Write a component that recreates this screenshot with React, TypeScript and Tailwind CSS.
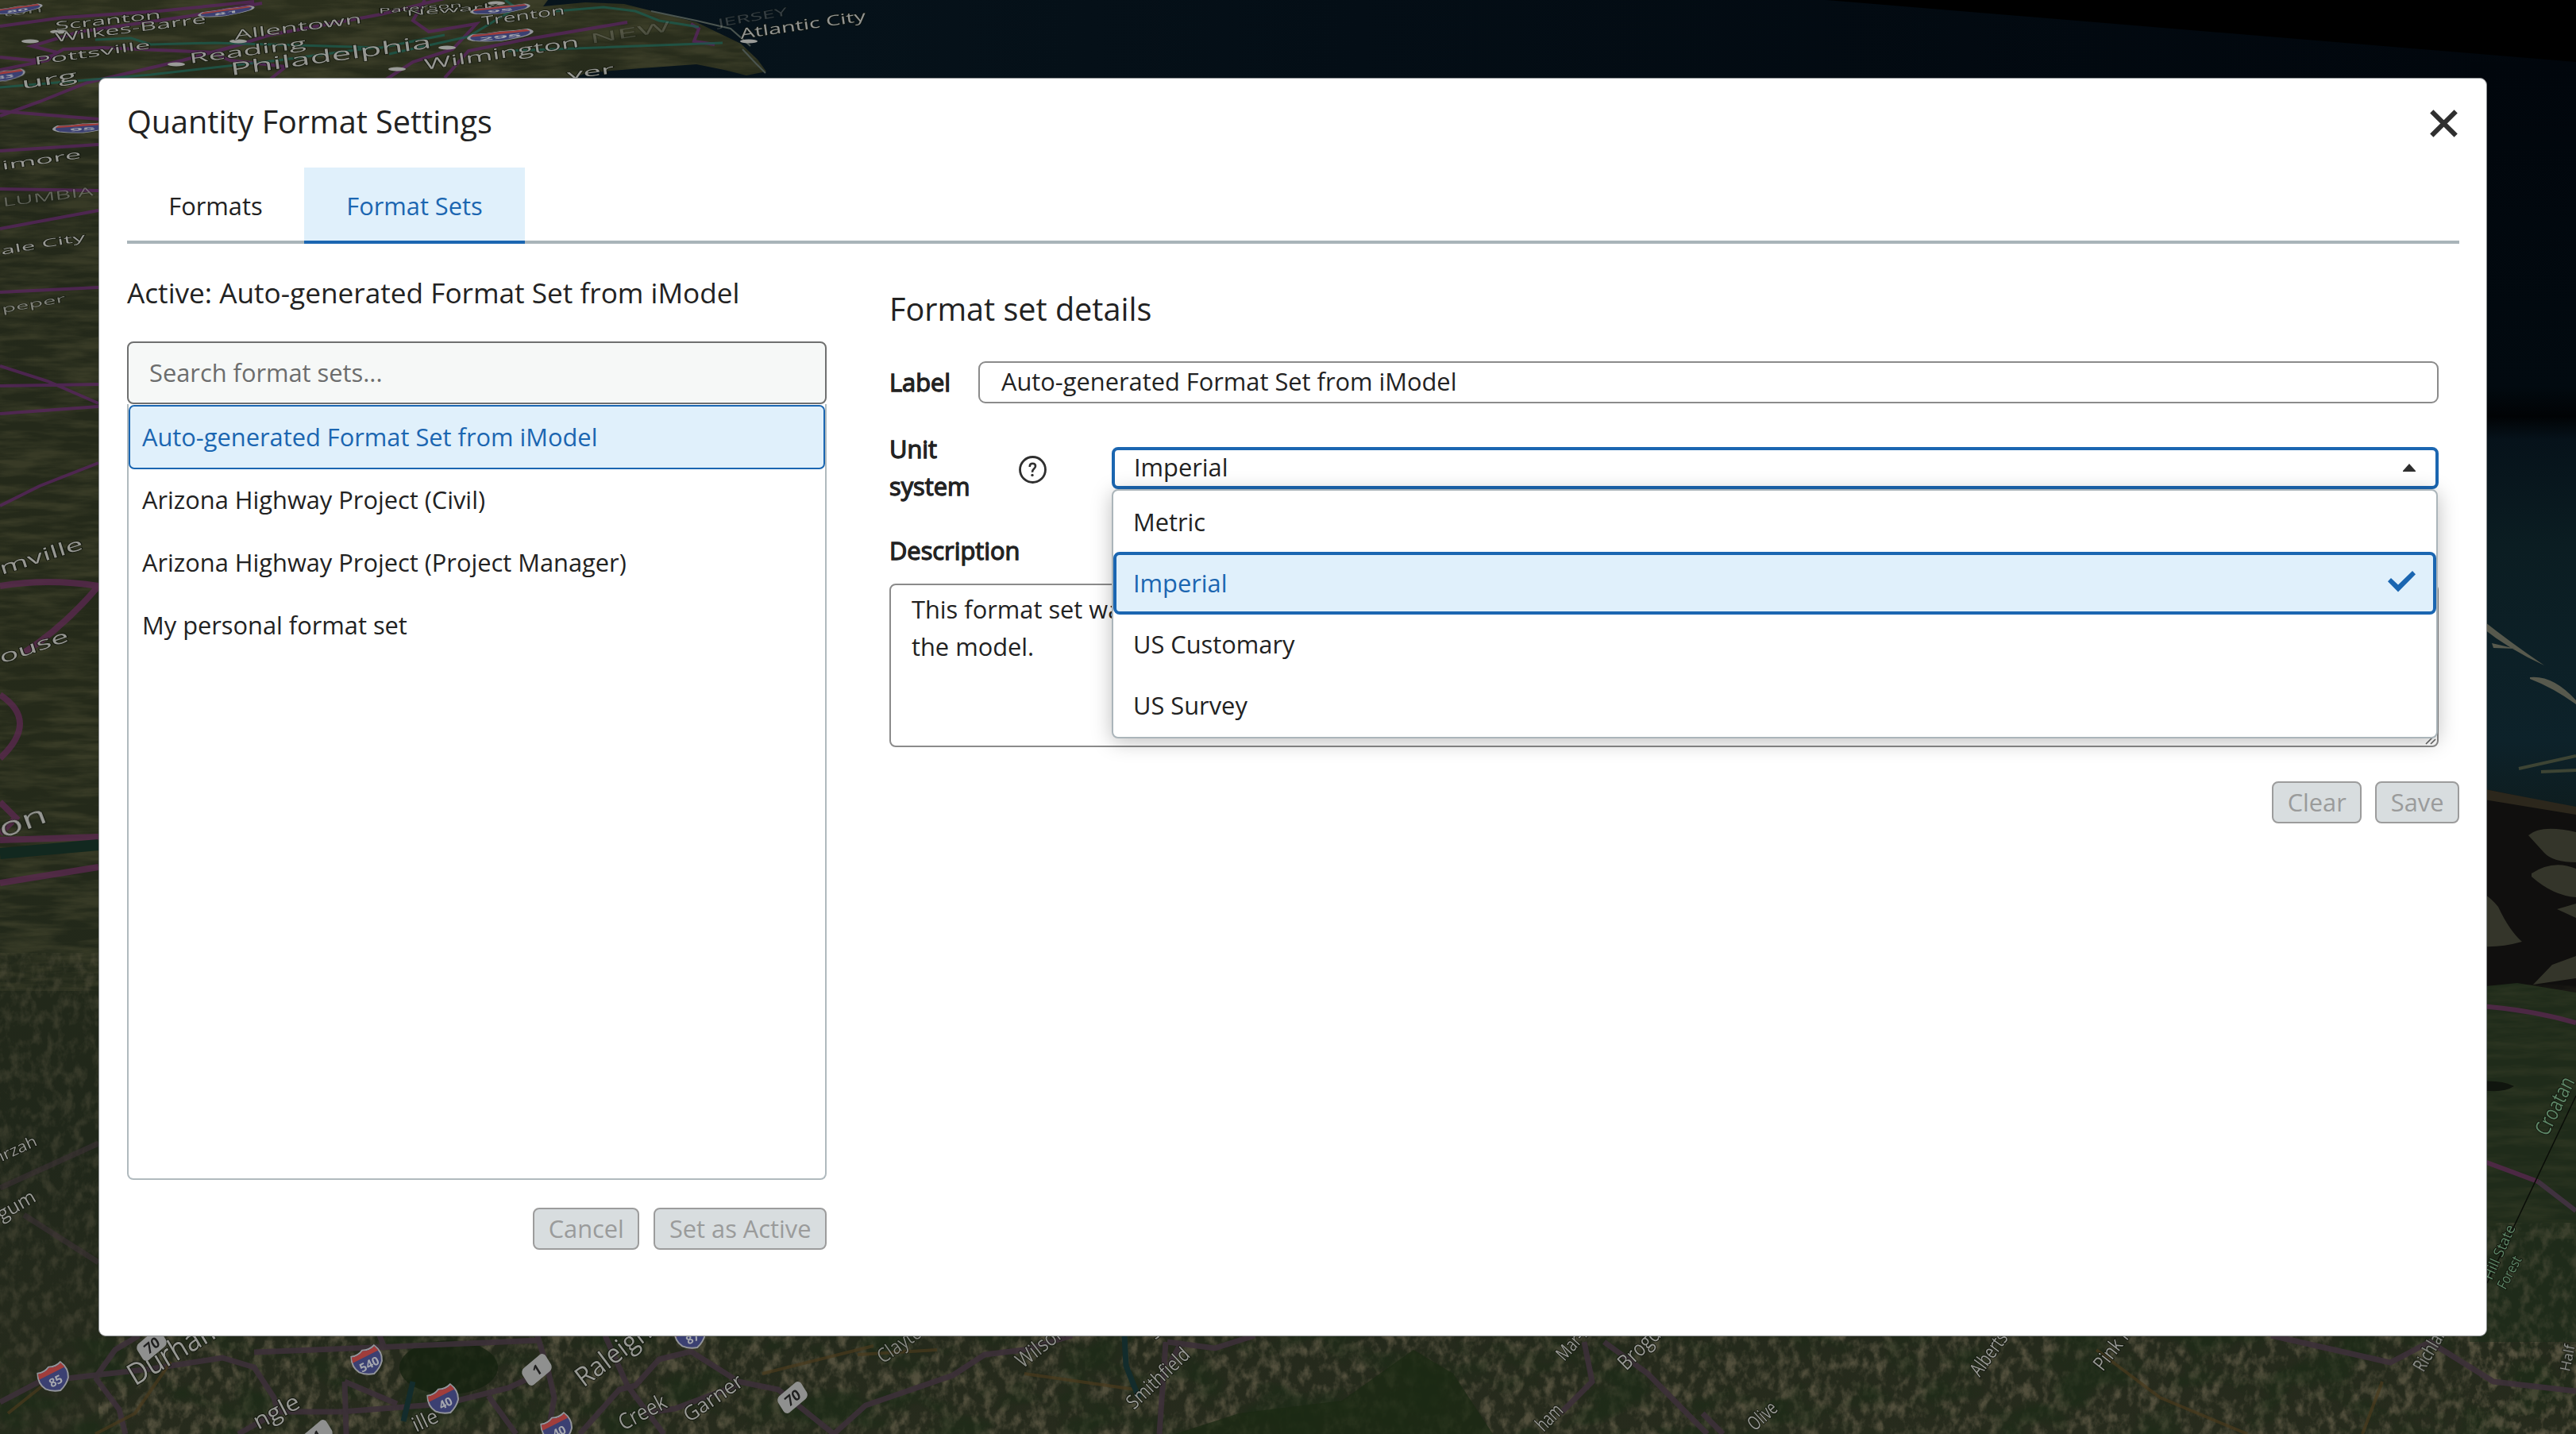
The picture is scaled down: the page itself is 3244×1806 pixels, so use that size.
import type { ReactNode } from "react";

type Label = { t: string; x1: number; y1: number; x2: number; y2: number; s: number; sy?: number; c?: string; o?: number };

const labels: Label[] = [
  { t: "Scranton", x1: 70, y1: 38, x2: 203, y2: 23, s: 24, sy: 0.6 },
  { t: "Wilkes-Barre", x1: 70, y1: 53, x2: 260, y2: 29, s: 28, sy: 0.55 },
  { t: "Allentown", x1: 296, y1: 50, x2: 456, y2: 29, s: 30, sy: 0.55 },
  { t: "Pottsville", x1: 44, y1: 82, x2: 190, y2: 61, s: 26, sy: 0.55 },
  { t: "Reading", x1: 239, y1: 80, x2: 386, y2: 60, s: 32, sy: 0.55 },
  { t: "Philadelphia", x1: 291, y1: 95, x2: 544, y2: 60, s: 40, sy: 0.55 },
  { t: "Wilmington", x1: 535, y1: 88, x2: 730, y2: 59, s: 34, sy: 0.55 },
  { t: "Trenton", x1: 607, y1: 32, x2: 712, y2: 18, s: 28, sy: 0.55 },
  { t: "Paterson", x1: 477, y1: 17, x2: 582, y2: 9, s: 18, sy: 0.5 },
  { t: "Newark", x1: 512, y1: 20, x2: 625, y2: 11, s: 20, sy: 0.5 },
  { t: "Atlantic City", x1: 933, y1: 49, x2: 1091, y2: 26, s: 30, sy: 0.6 },
  { t: "JERSEY", x1: 905, y1: 34, x2: 992, y2: 19, s: 28, sy: 0.5, o: 0.3 },
  { t: "NEW", x1: 744, y1: 55, x2: 845, y2: 39, s: 34, sy: 0.5, o: 0.25 },
  { t: "ver", x1: 715, y1: 100, x2: 774, y2: 92, s: 32, sy: 0.5 },
  { t: "urg", x1: 28, y1: 112, x2: 98, y2: 101, s: 34, sy: 0.55 },
  { t: "ton", x1: 4, y1: 21, x2: 54, y2: 15, s: 22, sy: 0.5, o: 0.6 },
  { t: "imore", x1: 3, y1: 214, x2: 103, y2: 199, s: 30, sy: 0.5 },
  { t: "LUMBIA", x1: 4, y1: 260, x2: 118, y2: 246, s: 34, sy: 0.45, o: 0.45 },
  { t: "ale City", x1: 2, y1: 321, x2: 108, y2: 303, s: 28, sy: 0.5 },
  { t: "peper", x1: 3, y1: 394, x2: 83, y2: 380, s: 26, sy: 0.5, o: 0.7 },
  { t: "mville", x1: 2, y1: 724, x2: 106, y2: 691, s: 34, sy: 0.65 },
  { t: "ouse", x1: 2, y1: 836, x2: 88, y2: 807, s: 34, sy: 0.65 },
  { t: "on", x1: 3, y1: 1056, x2: 61, y2: 1034, s: 44, sy: 0.75 },
  { t: "irzah", x1: 2, y1: 1463, x2: 48, y2: 1442, s: 24, sy: 0.8 },
  { t: "gum", x1: 2, y1: 1538, x2: 47, y2: 1512, s: 30, sy: 0.8 },
  { t: "Durham", x1: 170, y1: 1746, x2: 284, y2: 1678, s: 38 },
  { t: "Raleigh", x1: 735, y1: 1748, x2: 823, y2: 1682, s: 34 },
  { t: "Garner", x1: 868, y1: 1792, x2: 938, y2: 1744, s: 26 },
  { t: "Creek", x1: 785, y1: 1802, x2: 842, y2: 1772, s: 28 },
  { t: "ngle", x1: 325, y1: 1801, x2: 380, y2: 1772, s: 29 },
  { t: "ille", x1: 524, y1: 1804, x2: 554, y2: 1790, s: 26 },
  { t: "Clayton", x1: 1112, y1: 1718, x2: 1174, y2: 1674, s: 25, o: 0.75 },
  { t: "Wilson", x1: 1288, y1: 1724, x2: 1344, y2: 1680, s: 27, o: 0.8 },
  { t: "Smithfield", x1: 1428, y1: 1776, x2: 1500, y2: 1708, s: 25 },
  { t: "Se", x1: 1455, y1: 1688, x2: 1474, y2: 1670, s: 24 },
  { t: "Mar-Mac", x1: 1970, y1: 1715, x2: 2020, y2: 1660, s: 24 },
  { t: "Brogden", x1: 2048, y1: 1727, x2: 2112, y2: 1664, s: 27 },
  { t: "ham", x1: 1944, y1: 1804, x2: 1970, y2: 1778, s: 25 },
  { t: "Olive", x1: 2210, y1: 1803, x2: 2240, y2: 1776, s: 25 },
  { t: "Albertson", x1: 2493, y1: 1735, x2: 2543, y2: 1667, s: 25 },
  { t: "Pink Hill", x1: 2648, y1: 1728, x2: 2698, y2: 1664, s: 25 },
  { t: "Richlands", x1: 3052, y1: 1729, x2: 3092, y2: 1660, s: 24 },
  { t: "Half", x1: 3236, y1: 1728, x2: 3243, y2: 1695, s: 18 },
  { t: "Croatan", x1: 3208, y1: 1432, x2: 3243, y2: 1362, s: 27, c: "#64906f" },
  { t: "Hill State", x1: 3138, y1: 1613, x2: 3168, y2: 1546, s: 18, c: "#64906f" },
  { t: "Forest", x1: 3155, y1: 1625, x2: 3176, y2: 1586, s: 18, c: "#64906f" },
];

function MapLabel({ t, x1, y1, x2, y2, s, sy = 1, c = "#a3a4a0", o = 0.9 }: Label) {
  const len = Math.hypot(x2 - x1, y2 - y1);
  const angle = (Math.atan2(y2 - y1, x2 - x1) * 180) / Math.PI;
  return (
    <text
      transform={`translate(${x1} ${y1}) rotate(${angle}) scale(1 ${sy})`}
      fontSize={s}
      fontWeight={500}
      textLength={len}
      lengthAdjust="spacingAndGlyphs"
      fill={c}
      opacity={o}
      stroke="#11150d"
      strokeWidth={2}
      paintOrder="stroke"
    >
      {t}
    </text>
  );
}

function Interstate({ x, y, n, angle = -27, sx = 1, sy = 1 }: { x: number; y: number; n: string; angle?: number; sx?: number; sy?: number }) {
  return (
    <g transform={`translate(${x} ${y}) rotate(${angle}) scale(${sx} ${sy})`}>
      <path d="M-16 -14Q-8 -11 0 -15Q8 -11 16 -14Q22 -2 16 8Q10 15 0 18Q-10 15 -16 8Q-22 -2 -16 -14Z" fill="#3b4072" stroke="#93959a" strokeWidth="2" />
      <path d="M-16 -13Q-8 -10 0 -14Q8 -10 16 -13L18 -6H-18Z" fill="#a13d3b" />
      <text y="10" textAnchor="middle" fontSize="15" fontWeight="700" fill="#a5a7ae">{n}</text>
    </g>
  );
}

function Highway({ x, y, n }: { x: number; y: number; n: string }) {
  return (
    <g transform={`translate(${x} ${y}) rotate(-40) skewX(-8)`}>
      <rect x="-19" y="-12" width="38" height="24" rx="6" fill="#8f908f" />
      <text y="7" textAnchor="middle" fontSize="18" fontWeight="700" fill="#1e1e1e">{n}</text>
    </g>
  );
}

function MapBackdrop() {
  return (
    <svg className="absolute inset-0 h-full w-full font-['Open_Sans',sans-serif]" viewBox="0 0 3244 1806" aria-hidden="true">
      <defs>
        <linearGradient id="land" x1="0" y1="0" x2="0" y2="1">
          <stop offset="0" stopColor="#2b2f1d" />
          <stop offset="0.1" stopColor="#23281a" />
          <stop offset="0.5" stopColor="#252a1a" />
          <stop offset="0.8" stopColor="#20271a" />
          <stop offset="1" stopColor="#272b1d" />
        </linearGradient>
        <linearGradient id="sea" x1="0" y1="0" x2="0" y2="1">
          <stop offset="0" stopColor="#01060c" />
          <stop offset="0.43" stopColor="#020a10" />
          <stop offset="0.47" stopColor="#010305" />
          <stop offset="0.5" stopColor="#06121a" />
          <stop offset="0.64" stopColor="#0b1d22" />
          <stop offset="0.9" stopColor="#0d222a" />
          <stop offset="1" stopColor="#0e1c1e" />
        </linearGradient>
        <linearGradient id="seaTop" gradientUnits="userSpaceOnUse" x1="690" y1="0" x2="3244" y2="0">
          <stop offset="0" stopColor="#07141c" />
          <stop offset="0.4" stopColor="#040e16" />
          <stop offset="1" stopColor="#01060c" />
        </linearGradient>
        <filter id="streaks" x="0" y="0" width="100%" height="100%" colorInterpolationFilters="sRGB">
          <feTurbulence type="fractalNoise" baseFrequency="0.014 0.09" numOctaves="4" seed="4" />
          <feColorMatrix values="0 0 0 0 0.3  0 0 0 0 0.3  0 0 0 0 0.2  2.6 0 0 0 -0.95" />
        </filter>
        <filter id="fields" x="0" y="0" width="100%" height="100%" colorInterpolationFilters="sRGB">
          <feTurbulence type="fractalNoise" baseFrequency="0.075 0.055" numOctaves="4" seed="9" />
          <feColorMatrix values="0 0 0 0 0.38  0 0 0 0 0.36  0 0 0 0 0.28  3 0 0 0 -1.3" />
        </filter>
        <filter id="woods" x="0" y="0" width="100%" height="100%" colorInterpolationFilters="sRGB">
          <feTurbulence type="fractalNoise" baseFrequency="0.012 0.02" numOctaves="4" seed="21" />
          <feColorMatrix values="0 0 0 0 0.11  0 0 0 0 0.17  0 0 0 0 0.09  4 0 0 0 -1.9" />
        </filter>
      </defs>

      <rect width="3244" height="1806" fill="url(#land)" />
      <rect width="1100" height="110" filter="url(#streaks)" opacity="0.5" />
      <rect y="98" width="130" height="1150" filter="url(#streaks)" opacity="0.5" />
      <rect y="1200" width="130" height="606" filter="url(#fields)" opacity="0.35" />
      <rect x="124" y="1676" width="3120" height="130" filter="url(#fields)" opacity="0.75" />
      <rect y="1676" width="3244" height="130" filter="url(#woods)" opacity="0.7" />
      <ellipse cx="565" cy="1722" rx="62" ry="34" fill="#14210f" opacity="0.75" />
      <path d="M1480 1806L1560 1780L1690 1764L1780 1700L1830 1730L1880 1806Z" fill="#1b2913" opacity="0.75" />

      <path d="M684 8L737 3L786 5L877 28L933 55L954 75L965 90L940 95L912 88L877 81L807 86L737 92L700 110H3244V0H690Z" fill="url(#seaTop)" />
      <path d="M820 14L877 26L920 36L945 58M935 62L952 80L964 92" fill="none" stroke="#4b5550" strokeWidth="2" />
      <path d="M2300 0L3244 78V0Z" fill="#000" />

      <rect x="3110" y="78" width="134" height="950" fill="url(#sea)" />
      <path d="M3125 780Q3160 808 3204 838Q3160 818 3125 790ZM3186 853Q3215 850 3244 882V887Q3215 866 3186 855ZM3138 810L3168 817L3140 816Z" fill="#57594d" />
      <path d="M3172 968L3244 952M3200 972L3244 970" fill="none" stroke="#3d4434" strokeWidth="4" />
      <path d="M3110 990L3150 998L3244 1018V1300H3110Z" fill="#100f0e" />
      <path d="M3110 990L3160 1000L3244 1016V1026L3110 1004Z" fill="#2c271c" />
      <path d="M3184 1052Q3200 1038 3244 1048V1086Q3215 1086 3204 1074ZM3188 1100Q3215 1082 3244 1094V1130Q3215 1128 3188 1104ZM3220 1145L3244 1138V1156ZM3110 1120Q3130 1122 3146 1142Q3160 1172 3176 1186Q3140 1196 3110 1190ZM3214 1215L3244 1204V1232L3190 1240Z" fill="#34352a" />
      <path d="M3110 1244L3170 1238L3244 1250V1690H3110Z" fill="#1f2b1a" />
      <rect x="3110" y="1240" width="134" height="320" filter="url(#streaks)" opacity="0.25" />
      <rect x="3110" y="1540" width="134" height="266" filter="url(#fields)" opacity="0.4" />
      <path d="M3120 1362Q3150 1360 3166 1368Q3150 1378 3120 1372Z" fill="#10150e" />
      <path d="M3110 1266Q3180 1270 3244 1288M3110 1456L3196 1488" fill="none" stroke="#57284f" strokeWidth="6" opacity="0.8" />
      <path d="M3196 1488L3244 1525" fill="none" stroke="#40323f" strokeWidth="6" />
      <path d="M3132 1616L3244 1380" stroke="#0a0d08" strokeWidth="1.5" />

      <g fill="none" stroke="#5a2461" strokeWidth="4" opacity="0.75">
        <path d="M0 33L80 22L200 14L320 2M0 72L40 76L66 70L80 62L130 60L270 66L340 44L480 18L560 -2M0 146L50 128L110 104L230 76L310 54M0 88L60 76L72 66L40 58L100 40L240 20L330 4" />
        <path d="M270 68L290 76L360 84L340 100M480 104L520 78L570 62L600 30L540 40L520 26L535 0M560 98L590 64L660 50L790 28M870 30L880 36L874 52L900 56" />
        <path d="M0 140L124 150M0 190L124 182M0 238L124 240M0 288L124 265M0 368L124 362M0 461L60 480L124 508M0 486L124 484M0 521L124 512M0 637L50 612L124 583" />
        <path d="M0 738Q60 728 124 738Q80 790 30 822M0 875Q50 908 0 955M0 1010L20 1030L0 1050M0 1058L124 1054M0 1112L124 1092" strokeWidth="8" stroke="#5c2852" />
      </g>
      <path d="M0 1075L124 1064" stroke="#12281f" strokeWidth="14" />
      <path d="M490 68L590 46L650 10L636 0M120 50L165 48L190 56L270 54L480 60L560 44M640 64L910 54M0 110L190 94L350 76L470 60M700 14L760 9L800 14L830 26L880 34" fill="none" stroke="#1d5a4c" strokeWidth="3" opacity="0.8" />
      <g fill="none" stroke="#3d3039" strokeWidth="7" opacity="0.9">
        <path d="M0 1766L50 1740L110 1733L190 1724L280 1710L320 1722L345 1760L350 1778L430 1778L560 1768L640 1748L690 1725L676 1680M120 1735L150 1775L158 1806M120 1735L145 1700L175 1682M350 1778L300 1806M320 1703L470 1697L680 1688" />
        <path d="M478 1682L485 1700M434 1740L500 1768M434 1740L436 1806M615 1758L650 1806M690 1725L698 1760L690 1806M730 1806L780 1750L800 1745L830 1712L870 1702L930 1740L980 1750L1050 1806M762 1682L790 1745L836 1806M930 1744L850 1774L810 1780M1050 1806L1090 1770L1200 1732L1240 1706L1290 1700L1350 1682" />
        <path d="M1468 1690L1460 1806M1488 1690L1472 1720M1470 1690L1530 1698L1580 1682M1995 1690L2005 1740L1965 1780M2020 1690L2075 1730L2150 1806M2144 1780L2170 1806M2860 1682L3010 1716L3060 1690L3140 1740L3244 1752" />
        <path d="M0 1496L124 1440M30 1530L124 1590" opacity="0.6" />
      </g>
      <path d="M60 1740L10 1780M215 1715L170 1780L120 1806M1080 1706L1180 1700M1290 1730L1430 1750M2640 1700L2720 1760L2830 1806M3000 1740L2975 1806M960 1730L1100 1695" fill="none" stroke="#4a3b1d" strokeWidth="4" opacity="0.7" />
      <path d="M1416 1682L1418 1720L1434 1760M520 1740L508 1790" fill="none" stroke="#132c2c" strokeWidth="7" />

      {[[74, 40], [38, 52], [300, 52], [222, 81], [563, 60], [500, 87], [625, 4], [943, 52]].map(([x, y]) => (
        <ellipse key={`${x}-${y}`} cx={x} cy={y} rx="11" ry="2.5" fill="#9a9b98" />
      ))}
      {labels.map((l) => (
        <MapLabel key={l.t} {...l} />
      ))}
      <Interstate x={285} y={15} n="81" angle={-8} sx={1.8} sy={0.26} />
      <Interstate x={22} y={12} n="80" angle={-8} sx={1.6} sy={0.26} />
      <Interstate x={630} y={12} n="95" angle={-6} sx={1.9} sy={0.28} />
      <Interstate x={630} y={45} n="295" angle={-6} sx={2.1} sy={0.36} />
      <Interstate x={6} y={95} n="83" angle={-8} sx={1.3} sy={0.38} />
      <Interstate x={104} y={161} n="95" angle={-4} sx={1.9} sy={0.34} />
      <Interstate x={68} y={1735} n="85" />
      <Interstate x={463} y={1714} n="540" />
      <Interstate x={559} y={1763} n="40" />
      <Interstate x={702} y={1799} n="40" />
      <Interstate x={870} y={1681} n="87" />
      <Highway x={191} y={1694} n="70" />
      <Highway x={676} y={1725} n="1" />
      <Highway x={998} y={1760} n="70" />
      <Highway x={400} y={1808} n="1" />
    </svg>
  );
}

function DisabledButton({ children }: { children: ReactNode }) {
  return (
    <button disabled className="flex h-[53px] items-center rounded-[8px] border-2 border-[#9c9c9c] bg-[#d8dddf] px-[17.5px] text-[#9a9b9b]">
      {children}
    </button>
  );
}

const formatSets = ["Arizona Highway Project (Civil)", "Arizona Highway Project (Project Manager)", "My personal format set"];

export default function App() {
  return (
    <div className="relative h-[1806px] w-[3244px] overflow-hidden bg-[#242a19] pt-[98px] pl-[124px] font-['Open_Sans',sans-serif] text-[30.8px] leading-[47px] text-[#222]">
      <MapBackdrop />
      <main className="relative flex h-[1585px] w-[3008px] flex-col rounded-[9px] border border-[#8d9092] bg-white pr-[34px] pl-[35px]">
        <header className="flex h-[112px] items-center justify-between">
          <h1 className="-mt-1 text-[39.6px]">Quantity Format Settings</h1>
          <svg className="mr-[2px] h-[35px] w-[35px]" viewBox="0 0 35 35" stroke="#2f2f2f" strokeWidth="6">
            <path d="M2.3 2.3L32.7 32.7M32.7 2.3L2.3 32.7" />
          </svg>
        </header>

        <nav className="flex h-24 text-center">
          <div className="flex w-[223px] items-center justify-center border-b-4 border-[#a9b4b9] pt-1">Formats</div>
          <div className="flex w-[278px] items-center justify-center border-b-4 border-[#1b66b1] bg-[#e0f0fb] pt-1 text-[#1b66b1]">Format Sets</div>
          <div className="flex-1 border-b-4 border-[#a9b4b9]" />
        </nav>

        <div className="flex gap-[79px]">
          <section className="flex w-[881px] flex-col pt-[34px]">
            <h2 className="h-[54px] text-[35.2px] leading-[54px]">Active: Auto-generated Format Set from iModel</h2>
            <div className="mt-[35px] flex h-[79px] items-center rounded-[8px] border-2 border-[#6f7070] bg-[#f6f8f7] px-[26px] text-[#6c6d6d]">Search format sets...</div>
            <ul className="h-[977px] rounded-b-[8px] border-x-2 border-b-2 border-[#b0babe] pt-px">
              <li className="-mb-px flex h-[81px] items-center rounded-[7px] border-2 border-[#1b66b1] bg-[#e0f0fb] pl-[15px] text-[#1b66b1]">Auto-generated Format Set from iModel</li>
              {formatSets.map((s) => (
                <li key={s} className="flex h-[79px] items-center pl-[17px]">{s}</li>
              ))}
            </ul>
            <div className="mt-[35px] flex justify-end gap-[18px]">
              <DisabledButton>Cancel</DisabledButton>
              <DisabledButton>Set as Active</DisabledButton>
            </div>
          </section>

          <section className="flex flex-1 flex-col pt-[52px]">
            <div className="flex flex-col pr-[26px]">
              <h2 className="h-[60px] text-[39.6px] leading-[60px]">Format set details</h2>
              <div className="mt-9 flex items-center">
                <label className="w-[112px] [-webkit-text-stroke:1.3px_#222]">Label</label>
                <div className="flex h-[53px] flex-1 items-center rounded-[9px] border-2 border-[#8b8b8b] px-[27px] pb-[2px]">Auto-generated Format Set from iModel</div>
              </div>

              <div className="mt-[34px] flex h-[94px] items-center">
                <label className="w-[163px] [-webkit-text-stroke:1.3px_#222]">
                  Unit
                  <br />
                  system
                </label>
                <svg className="mt-1 h-[35px] w-[35px]" viewBox="0 0 35 35" fill="none" stroke="#2f2f2f" strokeWidth="2.8">
                  <circle cx="17.5" cy="17.5" r="16" />
                  <path d="M13.8 14V13.2Q13.8 9.8 17.4 9.8Q21 9.8 21 13Q21 14.8 19 16.4Q17 18 17 20.8" strokeWidth="2.6" />
                  <circle cx="17" cy="24.4" r="1.7" fill="#2f2f2f" stroke="none" />
                </svg>
                <div className="relative ml-[82px] flex-1">
                  <div className="flex h-[53px] items-center justify-between rounded-[8px] border-4 border-[#1b66b1] pr-[25px] pl-[24px]">
                    <span className="-mt-[2px]">Imperial</span>
                    <svg className="h-[10px] w-4" viewBox="0 0 16 10" fill="#2f2f2f">
                      <path d="M8 0L16 9V10H0V9Z" />
                    </svg>
                  </div>
                  <ul className="absolute top-[53px] left-0 z-10 h-[314px] w-[1670px] rounded-[8px] border-2 border-[#abb5ba] bg-white pt-px shadow-[0_4px_26px_rgba(0,0,0,0.26)]">
                    <li className="flex h-[77px] items-center pl-[25px]">Metric</li>
                    <li className="-my-px flex h-[79px] items-center justify-between rounded-[8px] border-4 border-[#1b66b1] bg-[#e0f0fb] pr-[22px] pl-[21px] text-[#1b66b1]">
                      Imperial
                      <svg className="-mt-1 h-[27px] w-[35px]" viewBox="0 0 35 27" fill="#1b66b1">
                        <path d="M4 9L13 17.5L31 0L35 4.2L13 26.5L0 13.2Z" />
                      </svg>
                    </li>
                    <li className="flex h-[77px] items-center pl-[25px]">US Customary</li>
                    <li className="flex h-[77px] items-center pl-[25px]">US Survey</li>
                  </ul>
                </div>
              </div>

              <label className="mt-[34px] [-webkit-text-stroke:1.3px_#222]">Description</label>
              <div className="relative mt-[18px] h-[206px] overflow-hidden rounded-[8px] border-2 border-[#8b8b8b] px-[26px] pt-[7px]">
                This format set was
                <br />
                the model.
                <svg className="absolute right-[1px] bottom-[1px] h-[13px] w-[14px]" viewBox="0 0 14 13" stroke="#666" strokeWidth="1.6">
                  <path d="M1 12L12 1M7 12L13 6" />
                </svg>
              </div>
            </div>
            <div className="mt-[43px] flex justify-end gap-[17px]">
              <DisabledButton>Clear</DisabledButton>
              <DisabledButton>Save</DisabledButton>
            </div>
          </section>
        </div>
      </main>
    </div>
  );
}
